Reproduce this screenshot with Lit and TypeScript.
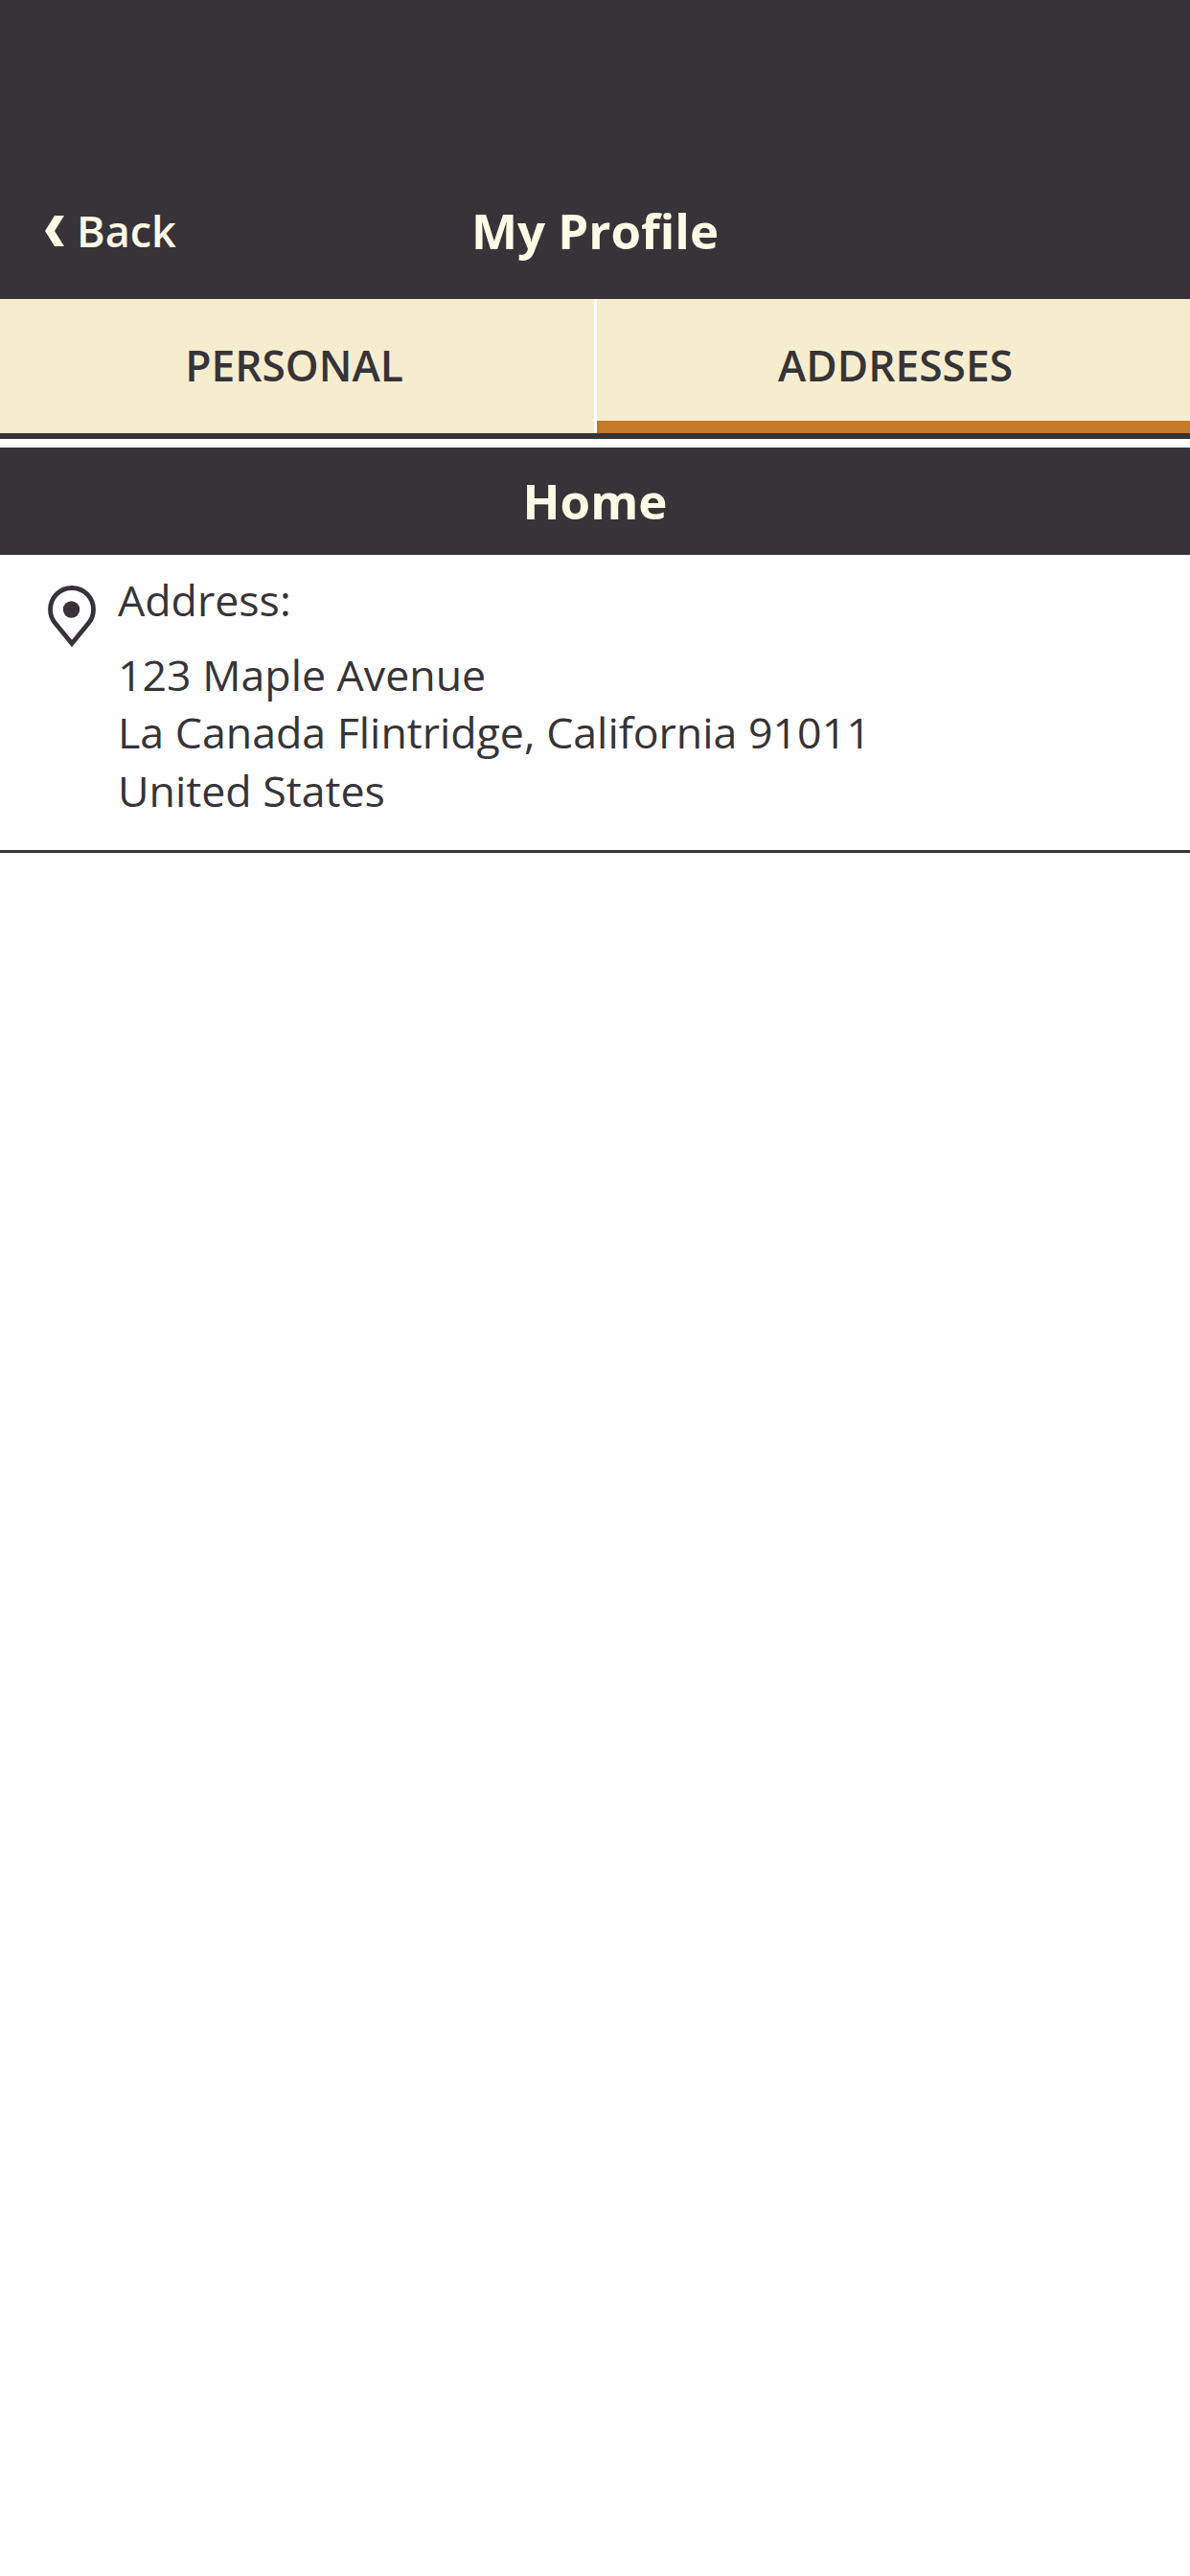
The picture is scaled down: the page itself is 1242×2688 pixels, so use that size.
import { LitElement, html, css } from "lit";
import { customElement } from "lit/decorators.js";

@customElement("app-root")
export class AppRoot extends LitElement {
  static styles = css`
    :host { display: block; width: 1242px; height: 2688px; background: #fff; font-family: "Open Sans", sans-serif; color: #363438; overflow: hidden; }
    .header { height: 312px; box-sizing: border-box; background: #363438; padding-top: 206px; position: relative; display: flex; justify-content: center; align-items: flex-start; }
    .title { font-size: 51px; font-weight: 700; line-height: 68px; color: #fdfbe6; }
    .back { position: absolute; left: 47px; top: 207px; display: flex; align-items: center; gap: 13px; font-size: 45px; font-weight: 600; line-height: 68px; color: #fdfbe6; }
    .back svg { width: 20px; height: 32px; display: block; }
    .tabs { display: grid; grid-template-columns: 623px 1fr; height: 146px; background: #363438; box-sizing: border-box; padding-bottom: 6px; }
    .tab { display: flex; align-items: center; justify-content: center; background: #f6edcf; font-size: 44.300px; font-weight: 600; box-sizing: border-box; padding-bottom: 2px; }
    .tab.first { border-right: 3px solid #fff; padding-right: 6px; }
    .tab.active { box-shadow: inset 0 -13px 0 #c5792a; padding-left: 4px; }
    .gap { height: 9px; }
    .section { height: 112px; background: #363438; color: #fdfbe6; font-size: 51px; font-weight: 700; display: flex; align-items: center; justify-content: center; padding-bottom: 2px; box-sizing: border-box; }
    .row { display: flex; height: 311px; box-sizing: border-box; border-bottom: 3px solid #363438; padding-top: 17px; }
    .icon { width: 50px; height: 64px; margin: 15px 0 0 50px; flex: none; display: block; }
    .body { margin-left: 23px; font-size: 44.700px; line-height: 60.500px; }
    .label { margin-bottom: 17px; }
  `;

  render() {
    return html`
      <div class="header">
        <div class="back">
          <svg viewBox="0 0 20 32"><polygon points="10,0 20,0 10,16 20,32 10,32 0,16" fill="#fdfbe6"/></svg>
          <span>Back</span>
        </div>
        <div class="title">My Profile</div>
      </div>
      <div class="tabs">
        <div class="tab first">PERSONAL</div>
        <div class="tab active">ADDRESSES</div>
      </div>
      <div class="gap"></div>
      <div class="section">Home</div>
      <div class="row">
        <svg class="icon" viewBox="0 0 50 64">
          <path d="M25 60.500 7 38.500C3.800 34.500 2.500 29.500 2.500 25 2.500 12.500 12.500 2.500 25 2.500S47.500 12.500 47.500 25C47.500 29.500 46.200 34.500 43 38.500Z" fill="none" stroke="#363438" stroke-width="4.800"/>
          <circle cx="24.500" cy="25" r="8.700" fill="#363438"/>
        </svg>
        <div class="body">
          <div class="label">Address:</div>
          <div>123 Maple Avenue</div>
          <div>La Canada Flintridge, California 91011</div>
          <div>United States</div>
        </div>
      </div>
    `;
  }
}
